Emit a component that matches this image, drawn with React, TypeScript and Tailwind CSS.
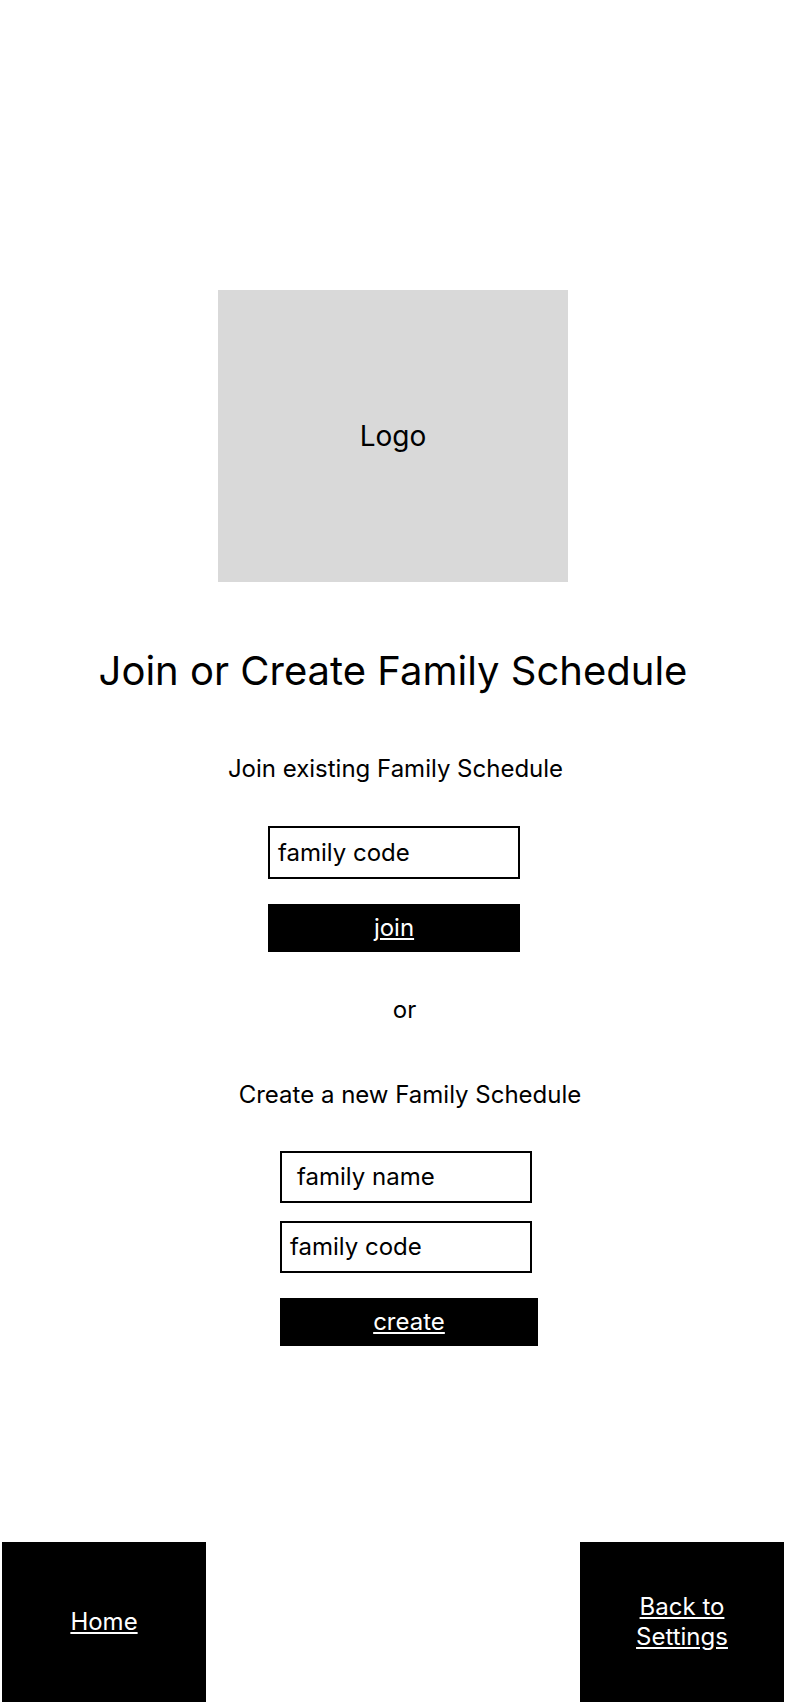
import React from "react";

export default function App() {
  return (
    <div className="w-[786px] h-[1704px] bg-white text-black flex flex-col font-['Inter',sans-serif] overflow-hidden">
      <div className="pt-[290px] flex justify-center">
        <div className="w-[350px] h-[292px] bg-[#d9d9d9] flex items-center justify-center text-[28px]">
          Logo
        </div>
      </div>

      <h1 className="mt-[65px] h-[48px] leading-[48px] text-[40px] text-center font-normal">
        Join or Create Family Schedule
      </h1>

      <p className="mt-[60px] h-[28px] leading-[28px] text-[24px] text-center pl-[5px]">
        Join existing Family Schedule
      </p>

      <div className="mt-[43px] ml-[268px] w-[252px] h-[53px] border-2 border-black flex items-center pl-[8px] text-[24px]">
        family code
      </div>

      <div className="mt-[25px] ml-[268px] w-[252px] h-[48px] bg-black flex items-center justify-center text-[24px] text-white">
        <span className="underline">join</span>
      </div>

      <p className="mt-[44px] h-[28px] leading-[28px] text-[24px] text-center pl-[23px]">
        or
      </p>

      <p className="mt-[57px] h-[28px] leading-[28px] text-[24px] text-center pl-[34px]">
        Create a new Family Schedule
      </p>

      <div className="mt-[42px] ml-[280px] w-[252px] h-[52px] border-2 border-black flex items-center pl-[15px] text-[24px]">
        family name
      </div>

      <div className="mt-[18px] ml-[280px] w-[252px] h-[52px] border-2 border-black flex items-center pl-[8px] text-[24px]">
        family code
      </div>

      <div className="mt-[25px] ml-[280px] w-[258px] h-[48px] bg-black flex items-center justify-center text-[24px] text-white">
        <span className="underline">create</span>
      </div>

      <div className="mt-auto flex justify-between px-[2px] pb-[2px]">
        <div className="w-[204px] h-[160px] bg-black text-white flex items-center justify-center text-[24px]">
          <span className="underline">Home</span>
        </div>
        <div className="w-[204px] h-[160px] bg-black text-white flex items-center justify-center text-[24px] leading-[30px] text-center">
          <span className="underline">
            Back to
            <br />
            Settings
          </span>
        </div>
      </div>
    </div>
  );
}
